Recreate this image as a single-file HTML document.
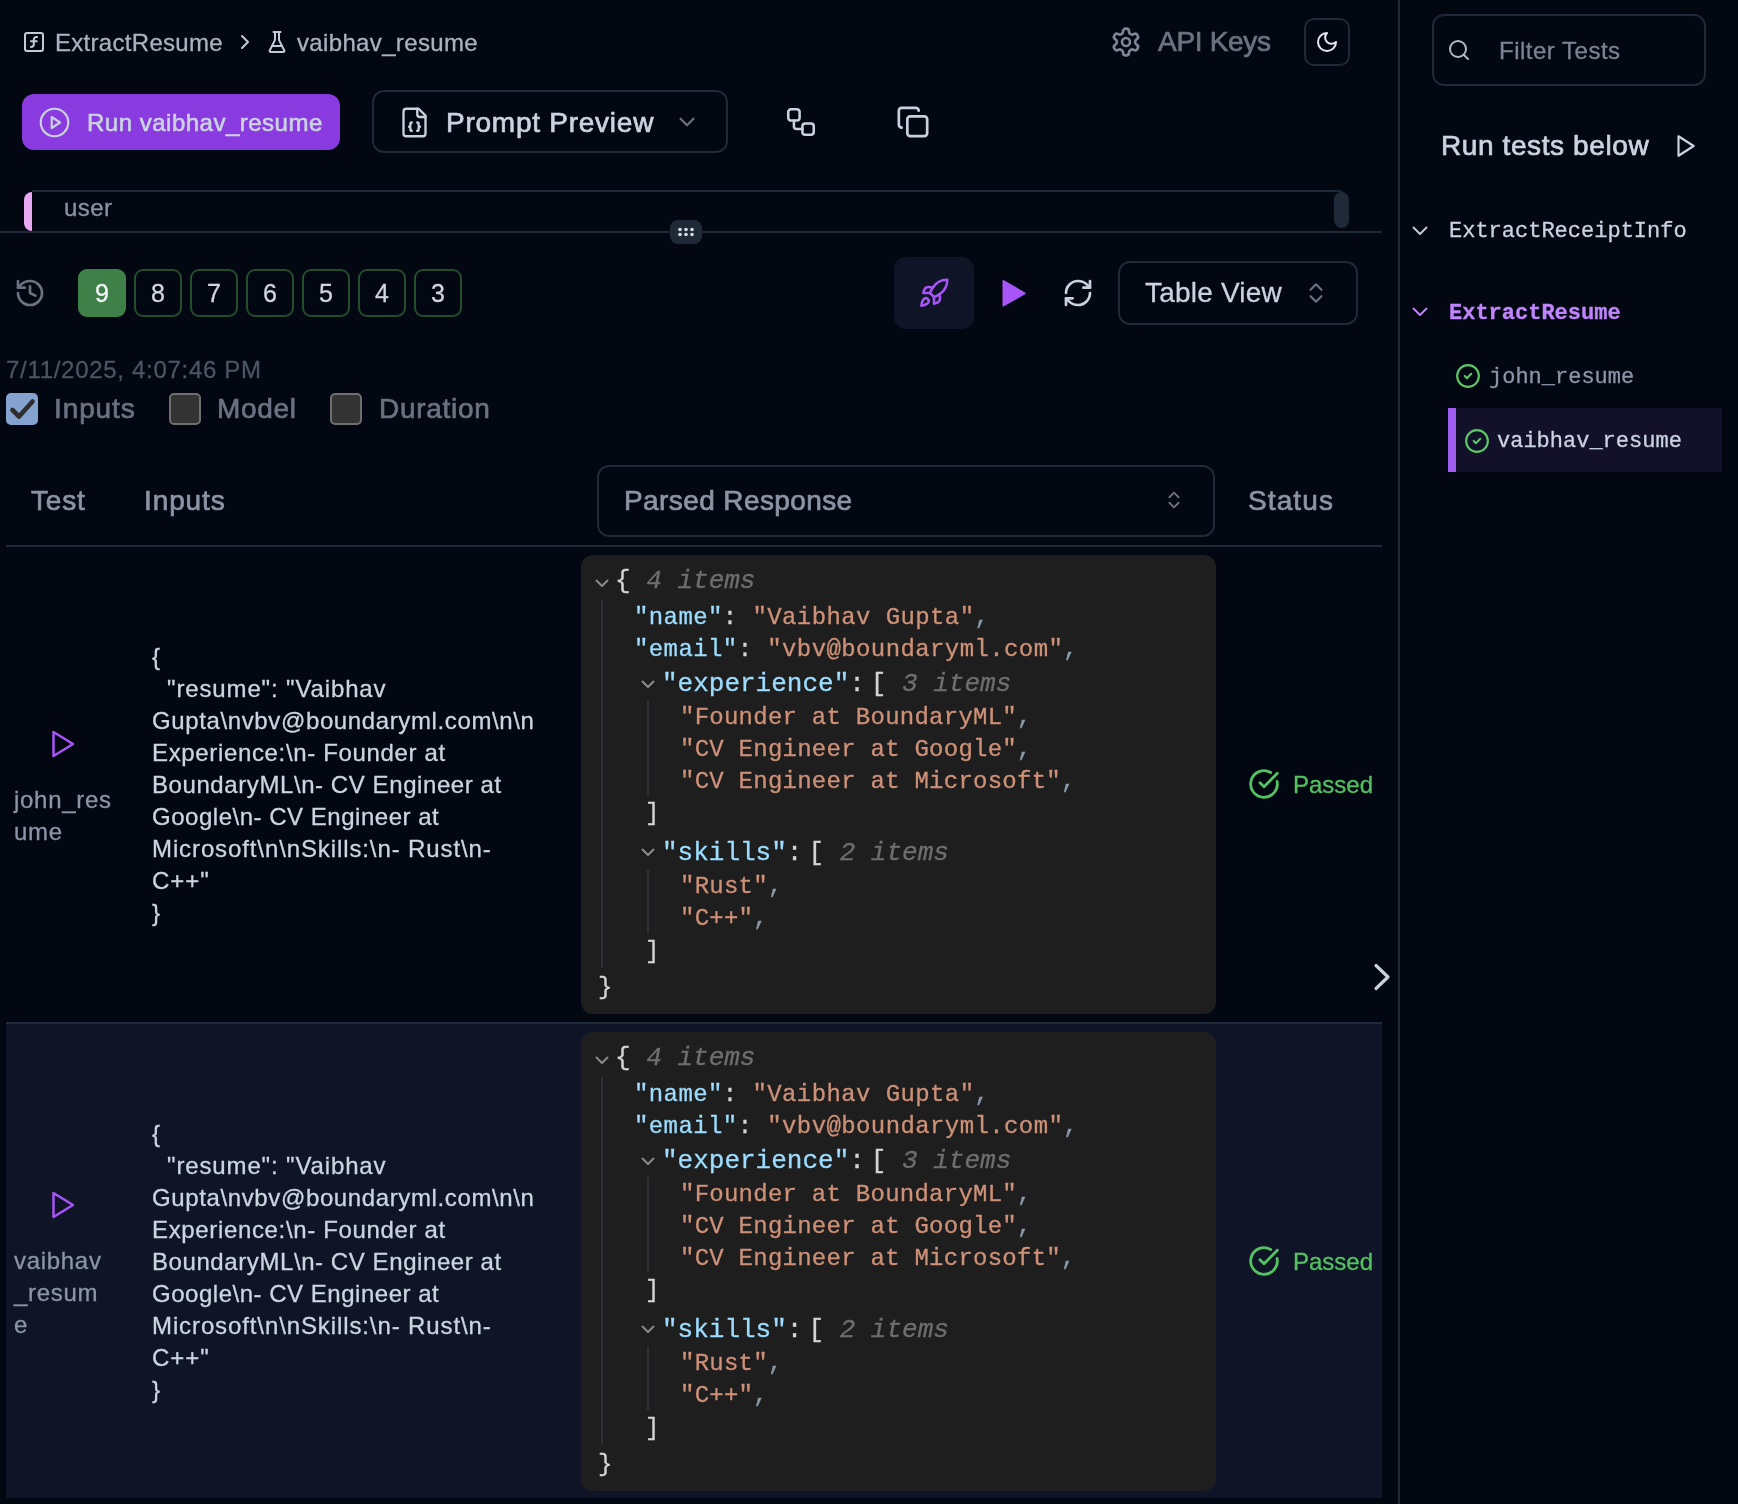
<!DOCTYPE html>
<html><head><meta charset="utf-8">
<style>
*{box-sizing:border-box;margin:0;padding:0}
html,body{width:1738px;height:1504px;overflow:hidden;background:#030712}
body{position:relative;font-family:"Liberation Sans",sans-serif;color:#cdd5e0}
.a{position:absolute;white-space:pre;line-height:1;-webkit-text-stroke-width:0.3px;will-change:transform}
.m{font-family:"Liberation Mono",monospace}
svg{position:absolute;overflow:visible}
.ic{fill:none;stroke:currentColor;stroke-linecap:round;stroke-linejoin:round}
.sb{-webkit-text-stroke-width:0.7px}
.box{position:absolute;border:2px solid #1f2937;border-radius:12px}
</style></head><body>

<!-- ===== TOP BAR ===== -->
<svg class="ic" style="left:22px;top:30px;width:24px;height:24px;color:#c3cbd8" viewBox="0 0 24 24" stroke-width="2"><rect width="18" height="18" x="3" y="3" rx="2" ry="2"/><path d="M9 17c2 0 2.8-1 2.8-2.8V10c0-2 1-3.3 3.2-3"/><path d="M9 11.2h5.7"/></svg>
<div class="a" style="left:55px;top:31px;font-size:24px;color:#aab2bf;letter-spacing:0.3px">ExtractResume</div>
<svg class="ic" style="left:233px;top:30px;width:24px;height:24px;color:#c3cbd8" viewBox="0 0 24 24" stroke-width="2"><path d="m9 18 6-6-6-6"/></svg>
<svg class="ic" style="left:265px;top:30px;width:24px;height:24px;color:#c3cbd8" viewBox="0 0 24 24" stroke-width="2"><path d="M10 2v7.527a2 2 0 0 1-.211.896L4.72 20.55a1 1 0 0 0 .9 1.45h12.76a1 1 0 0 0 .9-1.45l-5.069-10.127A2 2 0 0 1 14 9.527V2"/><path d="M8.5 2h7"/><path d="M7 16h10"/></svg>
<div class="a" style="left:297px;top:31px;font-size:24px;color:#aab2bf;letter-spacing:0.35px">vaibhav_resume</div>

<svg class="ic" style="left:1110px;top:26px;width:32px;height:32px;color:#7d8696" viewBox="0 0 24 24" stroke-width="2"><path d="M12.22 2h-.44a2 2 0 0 0-2 2v.18a2 2 0 0 1-1 1.73l-.43.25a2 2 0 0 1-2 0l-.15-.08a2 2 0 0 0-2.73.73l-.22.38a2 2 0 0 0 .73 2.73l.15.1a2 2 0 0 1 1 1.72v.51a2 2 0 0 1-1 1.74l-.15.09a2 2 0 0 0-.73 2.73l.22.38a2 2 0 0 0 2.730.73l.15-.08a2 2 0 0 1 2 0l.43.25a2 2 0 0 1 1 1.73V20a2 2 0 0 0 2 2h.44a2 2 0 0 0 2-2v-.18a2 2 0 0 1 1-1.73l.43-.25a2 2 0 0 1 2 0l.15.08a2 2 0 0 0 2.73-.73l.22-.39a2 2 0 0 0-.73-2.73l-.15-.08a2 2 0 0 1-1-1.74v-.5a2 2 0 0 1 1-1.74l.15-.09a2 2 0 0 0 .73-2.73l-.22-.38a2 2 0 0 0-2.73-.73l-.15.08a2 2 0 0 1-2 0l-.43-.25a2 2 0 0 1-1-1.73V4a2 2 0 0 0-2-2z"/><circle cx="12" cy="12" r="3"/></svg>
<div class="a sb" style="left:1158px;top:28px;font-size:28px;color:#6b7280;letter-spacing:-0.3px">API Keys</div>
<div class="box" style="left:1304px;top:18px;width:46px;height:48px;border-radius:10px"></div>
<svg class="ic" style="left:1315px;top:30px;width:24px;height:24px;color:#e5e9f0" viewBox="0 0 24 24" stroke-width="2"><path d="M12 3a6 6 0 0 0 9 9 9 9 0 1 1-9-9Z"/></svg>

<!-- Run button -->
<div style="position:absolute;left:22px;top:94px;width:318px;height:56px;background:#8a3be0;border-radius:12px"></div>
<svg class="ic" style="left:37.5px;top:105.5px;width:33px;height:33px;color:#c9d1df" viewBox="0 0 24 24" stroke-width="1.6"><circle cx="12" cy="12" r="10"/><polygon points="10 8 16 12 10 16 10 8"/></svg>
<div class="a sb" style="left:87px;top:111px;font-size:24px;color:#cbd3e1;letter-spacing:0.5px;-webkit-text-stroke-width:0.6px">Run vaibhav_resume</div>

<!-- Prompt Preview -->
<div class="box" style="left:372px;top:90px;width:356px;height:63px"></div>
<svg class="ic" style="left:397.5px;top:105.5px;width:33px;height:33px;color:#c9d1df" viewBox="0 0 24 24" stroke-width="1.7"><path d="M15 2H6a2 2 0 0 0-2 2v16a2 2 0 0 0 2 2h12a2 2 0 0 0 2-2V7Z"/><path d="M14 2v4a2 2 0 0 0 2 2h4"/><path d="M10 12a1 1 0 0 0-1 1v1a1 1 0 0 1-1 1 1 1 0 0 1 1 1v1a1 1 0 0 0 1 1"/><path d="M14 18a1 1 0 0 0 1-1v-1a1 1 0 0 1 1-1 1 1 0 0 1-1-1v-1a1 1 0 0 0-1-1"/></svg>
<div class="a sb" style="left:446px;top:109px;font-size:28px;color:#cbd3e1;letter-spacing:0.75px">Prompt Preview</div>
<svg class="ic" style="left:674px;top:109px;width:26px;height:26px;color:#6b7280" viewBox="0 0 24 24" stroke-width="2"><path d="m6 9 6 6 6-6"/></svg>

<svg class="ic" style="left:784px;top:105px;width:34px;height:34px;color:#c9d1df" viewBox="0 0 24 24" stroke-width="1.8"><rect width="8" height="8" x="3" y="3" rx="2"/><path d="M7 11v4a2 2 0 0 0 2 2h4"/><rect width="8" height="8" x="13" y="13" rx="2"/></svg>
<svg class="ic" style="left:896px;top:105px;width:34px;height:34px;color:#c9d1df" viewBox="0 0 24 24" stroke-width="1.9"><rect width="14" height="14" x="8" y="8" rx="2" ry="2"/><path d="M4 16c-1.1 0-2-.9-2-2V4c0-1.1.9-2 2-2h10c1.1 0 2 .9 2 2"/></svg>

<!-- user bar -->
<div style="position:absolute;left:32px;top:190px;width:1314px;height:42px;border-top:2px solid #1f2937;border-radius:0 8px 0 0"></div>
<div style="position:absolute;left:24px;top:192px;width:8px;height:39px;background:#e9a9f2;border-radius:8px 0 0 8px"></div>
<div class="a" style="left:64px;top:196px;font-size:24px;color:#8a94a6;letter-spacing:0.4px">user</div>
<div style="position:absolute;left:1334px;top:192px;width:15px;height:36px;background:#1f2937;border-radius:8px"></div>
<div style="position:absolute;left:0;top:231px;width:1382px;height:2px;background:#1f2937"></div>
<div style="position:absolute;left:670px;top:220px;width:32px;height:24px;background:#1f2937;border-radius:8px"></div>
<svg style="left:670px;top:220px;width:32px;height:24px" viewBox="0 0 32 24"><g fill="#d8dee8"><circle cx="10" cy="9.5" r="1.8"/><circle cx="16" cy="9.5" r="1.8"/><circle cx="22" cy="9.5" r="1.8"/><circle cx="10" cy="14.5" r="1.8"/><circle cx="16" cy="14.5" r="1.8"/><circle cx="22" cy="14.5" r="1.8"/></g></svg>

<!-- history row -->
<svg class="ic" style="left:14px;top:277px;width:32px;height:32px;color:#6b7280" viewBox="0 0 24 24" stroke-width="2"><path d="M3 12a9 9 0 1 0 9-9 9.75 9.75 0 0 0-6.74 2.74L3 8"/><path d="M3 3v5h5"/><path d="M12 7v5l4 2"/></svg>
<div style="position:absolute;left:78px;top:269px;width:48px;height:48px;background:#3f8048;border-radius:9px"></div>
<div class="a" style="left:78px;top:281px;width:48px;text-align:center;font-size:25px;color:#f3f5f8">9</div>
<div style="position:absolute;left:134px;top:269px;width:48px;height:48px;border:2px solid #244c2d;border-radius:9px"></div>
<div class="a" style="left:134px;top:281px;width:48px;text-align:center;font-size:25px;color:#d0d6e0">8</div>
<div style="position:absolute;left:190px;top:269px;width:48px;height:48px;border:2px solid #244c2d;border-radius:9px"></div>
<div class="a" style="left:190px;top:281px;width:48px;text-align:center;font-size:25px;color:#d0d6e0">7</div>
<div style="position:absolute;left:246px;top:269px;width:48px;height:48px;border:2px solid #244c2d;border-radius:9px"></div>
<div class="a" style="left:246px;top:281px;width:48px;text-align:center;font-size:25px;color:#d0d6e0">6</div>
<div style="position:absolute;left:302px;top:269px;width:48px;height:48px;border:2px solid #244c2d;border-radius:9px"></div>
<div class="a" style="left:302px;top:281px;width:48px;text-align:center;font-size:25px;color:#d0d6e0">5</div>
<div style="position:absolute;left:358px;top:269px;width:48px;height:48px;border:2px solid #244c2d;border-radius:9px"></div>
<div class="a" style="left:358px;top:281px;width:48px;text-align:center;font-size:25px;color:#d0d6e0">4</div>
<div style="position:absolute;left:414px;top:269px;width:48px;height:48px;border:2px solid #244c2d;border-radius:9px"></div>
<div class="a" style="left:414px;top:281px;width:48px;text-align:center;font-size:25px;color:#d0d6e0">3</div>

<!-- right tools -->
<div style="position:absolute;left:894px;top:257px;width:80px;height:72px;background:#0f1527;border-radius:12px"></div>
<svg class="ic" style="left:918px;top:277px;width:32px;height:32px;color:#a855f7" viewBox="0 0 24 24" stroke-width="1.9"><path d="M4.5 16.5c-1.5 1.26-2 5-2 5s3.74-.5 5-2c.71-.84.7-2.13-.09-2.91a2.18 2.18 0 0 0-2.91-.09z"/><path d="m12 15-3-3a22 22 0 0 1 2-3.95A12.88 12.88 0 0 1 22 2c0 2.72-.78 7.5-6 11a22.35 22.35 0 0 1-4 2z"/><path d="M9 12H4s.55-3.03 2-4c1.62-1.08 5 0 5 0"/><path d="M12 15v5s3.03-.55 4-2c1.08-1.62 0-5 0-5"/></svg>
<svg style="left:996px;top:274px;width:36px;height:36px" viewBox="0 0 36 36"><polygon points="7.5 7 28.5 19.3 7.5 31.5" fill="#a855f7" stroke="#a855f7" stroke-width="2" stroke-linejoin="round"/></svg>
<svg class="ic" style="left:1062px;top:277px;width:32px;height:32px;color:#c9d1df" viewBox="0 0 24 24" stroke-width="2"><path d="M3 12a9 9 0 0 1 9-9 9.75 9.75 0 0 1 6.74 2.74L21 8"/><path d="M21 3v5h-5"/><path d="M21 12a9 9 0 0 1-9 9 9.75 9.75 0 0 1-6.74-2.74L3 16"/><path d="M8 16H3v5"/></svg>
<div class="box" style="left:1118px;top:261px;width:240px;height:64px"></div>
<div class="a" style="left:1145px;top:279px;font-size:28px;color:#cbd3e1;letter-spacing:0.2px">Table View</div>
<svg class="ic" style="left:1303px;top:280px;width:26px;height:26px;color:#6b7280" viewBox="0 0 24 24" stroke-width="2"><path d="m7 15 5 5 5-5"/><path d="m7 9 5-5 5 5"/></svg>

<!-- date + checkboxes -->
<div class="a" style="left:6px;top:358px;font-size:24px;color:#4b5563;letter-spacing:0.7px">7/11/2025, 4:07:46 PM</div>
<div style="position:absolute;left:6px;top:393px;width:32px;height:32px;background:#84a3d0;border-radius:5px"></div>
<svg class="ic" style="left:6px;top:393px;width:32px;height:32px;color:#2e2e2e" viewBox="0 0 32 32" stroke-width="4.6" stroke-linecap="butt" stroke-linejoin="miter"><path d="M6.5 17l6.5 6.5L26.5 8.5"/></svg>
<div class="a sb" style="left:54px;top:395px;font-size:28px;color:#6b7280;letter-spacing:0.9px">Inputs</div>
<div style="position:absolute;left:169px;top:393px;width:32px;height:32px;background:#333;border:2px solid #6f6f6f;border-radius:5px"></div>
<div class="a sb" style="left:217px;top:395px;font-size:28px;color:#6b7280;letter-spacing:0.65px">Model</div>
<div style="position:absolute;left:330px;top:393px;width:32px;height:32px;background:#333;border:2px solid #6f6f6f;border-radius:5px"></div>
<div class="a sb" style="left:379px;top:395px;font-size:28px;color:#6b7280;letter-spacing:0.7px">Duration</div>

<!-- table header -->
<div class="a sb" style="left:31px;top:487px;font-size:28px;color:#8b95a5;letter-spacing:0.85px">Test</div>
<div class="a sb" style="left:144px;top:487px;font-size:28px;color:#8b95a5;letter-spacing:0.9px">Inputs</div>
<div class="box" style="left:597px;top:465px;width:618px;height:72px"></div>
<div class="a sb" style="left:624px;top:487px;font-size:28px;color:#8b95a5;letter-spacing:0.4px">Parsed Response</div>
<svg class="ic" style="left:1163px;top:489px;width:22px;height:22px;color:#6b7280" viewBox="0 0 24 24" stroke-width="2"><path d="m7 15 5 5 5-5"/><path d="m7 9 5-5 5 5"/></svg>
<div class="a sb" style="left:1248px;top:487px;font-size:28px;color:#8b95a5;letter-spacing:1.1px">Status</div>
<div style="position:absolute;left:6px;top:545px;width:1376px;height:2px;background:#1f2937"></div>

<!-- rows -->
<svg class="ic" style="left:50px;top:729px;width:26px;height:30px;color:#a855f7" viewBox="0 0 26 30" stroke-width="2.5"><path d="M3.5 3v24L23 15z"/></svg>
<div class="a" style="left:14px;top:788.3px;font-size:24px;color:#8b95a7;letter-spacing:0.7px">john_res</div>
<div class="a" style="left:14px;top:820.3px;font-size:24px;color:#8b95a7;letter-spacing:0.7px">ume</div>
<div class="a" style="left:152px;top:644.7px;font-size:24px;color:#cbd5e1;letter-spacing:0px">{</div>
<div class="a" style="left:152px;top:676.7px;font-size:24px;color:#cbd5e1;letter-spacing:0.86px">  "resume": "Vaibhav</div>
<div class="a" style="left:152px;top:708.7px;font-size:24px;color:#cbd5e1;letter-spacing:0.62px">Gupta\nvbv@boundaryml.com\n\n</div>
<div class="a" style="left:152px;top:740.7px;font-size:24px;color:#cbd5e1;letter-spacing:0.65px">Experience:\n- Founder at</div>
<div class="a" style="left:152px;top:772.7px;font-size:24px;color:#cbd5e1;letter-spacing:0.58px">BoundaryML\n- CV Engineer at</div>
<div class="a" style="left:152px;top:804.7px;font-size:24px;color:#cbd5e1;letter-spacing:0.52px">Google\n- CV Engineer at</div>
<div class="a" style="left:152px;top:836.7px;font-size:24px;color:#cbd5e1;letter-spacing:0.89px">Microsoft\n\nSkills:\n- Rust\n-</div>
<div class="a" style="left:152px;top:868.7px;font-size:24px;color:#cbd5e1;letter-spacing:1.0px">C++"</div>
<div class="a" style="left:152px;top:900.7px;font-size:24px;color:#cbd5e1;letter-spacing:0px">}</div>
<div style="position:absolute;left:581px;top:555px;width:635px;height:459px;background:#1e1e1e;border-radius:12px"></div>
<div style="position:absolute;left:601px;top:600px;width:2px;height:368px;background:#2f2f38"></div>
<div style="position:absolute;left:647px;top:700px;width:2px;height:95px;background:#2f2f38"></div>
<div style="position:absolute;left:647px;top:870px;width:2px;height:63px;background:#2f2f38"></div>
<svg class="ic" style="left:595px;top:579px;width:14px;height:9px;color:#8a8a8a" viewBox="0 0 14 9" stroke-width="2"><path d="M1.5 1.5l5.5 5.5 5.5-5.5"/></svg>
<svg class="ic" style="left:641px;top:680px;width:14px;height:9px;color:#8a8a8a" viewBox="0 0 14 9" stroke-width="2"><path d="M1.5 1.5l5.5 5.5 5.5-5.5"/></svg>
<svg class="ic" style="left:641px;top:848px;width:14px;height:9px;color:#8a8a8a" viewBox="0 0 14 9" stroke-width="2"><path d="M1.5 1.5l5.5 5.5 5.5-5.5"/></svg>
<div class="a m" style="left:615px;top:567.6px;font-size:26px;color:#d4d4d4;letter-spacing:0px">{ <i style="color:#6e6e6e">4 items</i></div>
<div class="a m" style="left:633.5px;top:606.4px;font-size:24px;color:#d4d4d4;letter-spacing:0.4px"><span style="color:#9cdcfe">"name"</span>: <span style="color:#ce9178">"Vaibhav Gupta"</span><span style="color:#8899aa">,</span></div>
<div class="a m" style="left:633.5px;top:638.3px;font-size:24px;color:#d4d4d4;letter-spacing:0.4px"><span style="color:#9cdcfe">"email"</span>: <span style="color:#ce9178">"vbv@boundaryml.com"</span><span style="color:#8899aa">,</span></div>
<div class="a m" style="left:662px;top:670.9px;font-size:26px;color:#d4d4d4;letter-spacing:0px"><span style="color:#9cdcfe">"experience"</span>:<span style="margin-left:6px">[</span> <i style="color:#6e6e6e">3 items</i></div>
<div class="a m" style="left:679.5px;top:706.2px;font-size:24px;color:#d4d4d4;letter-spacing:0.25px"><span style="color:#ce9178">"Founder at BoundaryML"</span><span style="color:#8899aa">,</span></div>
<div class="a m" style="left:679.5px;top:738.1px;font-size:24px;color:#d4d4d4;letter-spacing:0.25px"><span style="color:#ce9178">"CV Engineer at Google"</span><span style="color:#8899aa">,</span></div>
<div class="a m" style="left:679.5px;top:770.0px;font-size:24px;color:#d4d4d4;letter-spacing:0.25px"><span style="color:#ce9178">"CV Engineer at Microsoft"</span><span style="color:#8899aa">,</span></div>
<div class="a m" style="left:645px;top:802.1px;font-size:24px;color:#d4d4d4;letter-spacing:0px">]</div>
<div class="a m" style="left:662px;top:839.7px;font-size:26px;color:#d4d4d4;letter-spacing:0px"><span style="color:#9cdcfe">"skills"</span>:<span style="margin-left:6px">[</span> <i style="color:#6e6e6e">2 items</i></div>
<div class="a m" style="left:679.5px;top:875.1px;font-size:24px;color:#d4d4d4;letter-spacing:0.25px"><span style="color:#ce9178">"Rust"</span><span style="color:#8899aa">,</span></div>
<div class="a m" style="left:679.5px;top:907.2px;font-size:24px;color:#d4d4d4;letter-spacing:0.25px"><span style="color:#ce9178">"C++"</span><span style="color:#8899aa">,</span></div>
<div class="a m" style="left:645px;top:940.1px;font-size:24px;color:#d4d4d4;letter-spacing:0px">]</div>
<div class="a m" style="left:598px;top:976.1px;font-size:24px;color:#d4d4d4;letter-spacing:0px">}</div>
<svg class="ic" style="left:1248px;top:768px;width:32px;height:32px;color:#55c261" viewBox="0 0 24 24" stroke-width="2.1"><path d="M21.801 10A10 10 0 1 1 17 3.335"/><path d="m9 11 3 3L22 4"/></svg>
<div class="a" style="left:1293px;top:772.7px;font-size:24px;color:#55c261">Passed</div>
<svg class="ic" style="left:1370px;top:960px;width:24px;height:34px;color:#c9d1df" viewBox="0 0 24 34" stroke-width="3.2"><path d="M6 5.5l12 11.5-12 11.5"/></svg>
<div style="position:absolute;left:6px;top:1022px;width:1376px;height:2px;background:#1f2937"></div>
<div style="position:absolute;left:6px;top:1024px;width:1376px;height:474px;background:#0f1527"></div>
<svg class="ic" style="left:50px;top:1190px;width:26px;height:30px;color:#a855f7" viewBox="0 0 26 30" stroke-width="2.5"><path d="M3.5 3v24L23 15z"/></svg>
<div class="a" style="left:14px;top:1249.3px;font-size:24px;color:#8b95a7;letter-spacing:0.7px">vaibhav</div>
<div class="a" style="left:14px;top:1281.3px;font-size:24px;color:#8b95a7;letter-spacing:0.7px">_resum</div>
<div class="a" style="left:14px;top:1313.3px;font-size:24px;color:#8b95a7;letter-spacing:0.7px">e</div>
<div class="a" style="left:152px;top:1121.7px;font-size:24px;color:#cbd5e1;letter-spacing:0px">{</div>
<div class="a" style="left:152px;top:1153.7px;font-size:24px;color:#cbd5e1;letter-spacing:0.86px">  "resume": "Vaibhav</div>
<div class="a" style="left:152px;top:1185.7px;font-size:24px;color:#cbd5e1;letter-spacing:0.62px">Gupta\nvbv@boundaryml.com\n\n</div>
<div class="a" style="left:152px;top:1217.7px;font-size:24px;color:#cbd5e1;letter-spacing:0.65px">Experience:\n- Founder at</div>
<div class="a" style="left:152px;top:1249.7px;font-size:24px;color:#cbd5e1;letter-spacing:0.58px">BoundaryML\n- CV Engineer at</div>
<div class="a" style="left:152px;top:1281.7px;font-size:24px;color:#cbd5e1;letter-spacing:0.52px">Google\n- CV Engineer at</div>
<div class="a" style="left:152px;top:1313.7px;font-size:24px;color:#cbd5e1;letter-spacing:0.89px">Microsoft\n\nSkills:\n- Rust\n-</div>
<div class="a" style="left:152px;top:1345.7px;font-size:24px;color:#cbd5e1;letter-spacing:1.0px">C++"</div>
<div class="a" style="left:152px;top:1377.7px;font-size:24px;color:#cbd5e1;letter-spacing:0px">}</div>
<div style="position:absolute;left:581px;top:1032px;width:635px;height:459px;background:#1e1e1e;border-radius:12px"></div>
<div style="position:absolute;left:601px;top:1077px;width:2px;height:368px;background:#2f2f38"></div>
<div style="position:absolute;left:647px;top:1177px;width:2px;height:95px;background:#2f2f38"></div>
<div style="position:absolute;left:647px;top:1347px;width:2px;height:63px;background:#2f2f38"></div>
<svg class="ic" style="left:595px;top:1056px;width:14px;height:9px;color:#8a8a8a" viewBox="0 0 14 9" stroke-width="2"><path d="M1.5 1.5l5.5 5.5 5.5-5.5"/></svg>
<svg class="ic" style="left:641px;top:1157px;width:14px;height:9px;color:#8a8a8a" viewBox="0 0 14 9" stroke-width="2"><path d="M1.5 1.5l5.5 5.5 5.5-5.5"/></svg>
<svg class="ic" style="left:641px;top:1325px;width:14px;height:9px;color:#8a8a8a" viewBox="0 0 14 9" stroke-width="2"><path d="M1.5 1.5l5.5 5.5 5.5-5.5"/></svg>
<div class="a m" style="left:615px;top:1044.6px;font-size:26px;color:#d4d4d4;letter-spacing:0px">{ <i style="color:#6e6e6e">4 items</i></div>
<div class="a m" style="left:633.5px;top:1083.4px;font-size:24px;color:#d4d4d4;letter-spacing:0.4px"><span style="color:#9cdcfe">"name"</span>: <span style="color:#ce9178">"Vaibhav Gupta"</span><span style="color:#8899aa">,</span></div>
<div class="a m" style="left:633.5px;top:1115.3px;font-size:24px;color:#d4d4d4;letter-spacing:0.4px"><span style="color:#9cdcfe">"email"</span>: <span style="color:#ce9178">"vbv@boundaryml.com"</span><span style="color:#8899aa">,</span></div>
<div class="a m" style="left:662px;top:1147.9px;font-size:26px;color:#d4d4d4;letter-spacing:0px"><span style="color:#9cdcfe">"experience"</span>:<span style="margin-left:6px">[</span> <i style="color:#6e6e6e">3 items</i></div>
<div class="a m" style="left:679.5px;top:1183.2px;font-size:24px;color:#d4d4d4;letter-spacing:0.25px"><span style="color:#ce9178">"Founder at BoundaryML"</span><span style="color:#8899aa">,</span></div>
<div class="a m" style="left:679.5px;top:1215.1px;font-size:24px;color:#d4d4d4;letter-spacing:0.25px"><span style="color:#ce9178">"CV Engineer at Google"</span><span style="color:#8899aa">,</span></div>
<div class="a m" style="left:679.5px;top:1247.0px;font-size:24px;color:#d4d4d4;letter-spacing:0.25px"><span style="color:#ce9178">"CV Engineer at Microsoft"</span><span style="color:#8899aa">,</span></div>
<div class="a m" style="left:645px;top:1279.1px;font-size:24px;color:#d4d4d4;letter-spacing:0px">]</div>
<div class="a m" style="left:662px;top:1316.7px;font-size:26px;color:#d4d4d4;letter-spacing:0px"><span style="color:#9cdcfe">"skills"</span>:<span style="margin-left:6px">[</span> <i style="color:#6e6e6e">2 items</i></div>
<div class="a m" style="left:679.5px;top:1352.1px;font-size:24px;color:#d4d4d4;letter-spacing:0.25px"><span style="color:#ce9178">"Rust"</span><span style="color:#8899aa">,</span></div>
<div class="a m" style="left:679.5px;top:1384.2px;font-size:24px;color:#d4d4d4;letter-spacing:0.25px"><span style="color:#ce9178">"C++"</span><span style="color:#8899aa">,</span></div>
<div class="a m" style="left:645px;top:1417.1px;font-size:24px;color:#d4d4d4;letter-spacing:0px">]</div>
<div class="a m" style="left:598px;top:1453.1px;font-size:24px;color:#d4d4d4;letter-spacing:0px">}</div>
<svg class="ic" style="left:1248px;top:1245px;width:32px;height:32px;color:#55c261" viewBox="0 0 24 24" stroke-width="2.1"><path d="M21.801 10A10 10 0 1 1 17 3.335"/><path d="m9 11 3 3L22 4"/></svg>
<div class="a" style="left:1293px;top:1249.7px;font-size:24px;color:#55c261">Passed</div>

<!-- sidebar -->
<div style="position:absolute;left:1398px;top:0;width:2px;height:1504px;background:#1f2937"></div>
<div class="box" style="left:1432px;top:14px;width:274px;height:72px"></div>
<svg class="ic" style="left:1447px;top:38px;width:24px;height:24px;color:#b0b8c4" viewBox="0 0 24 24" stroke-width="2"><circle cx="11" cy="11" r="8"/><path d="m21 21-4.3-4.3"/></svg>
<div class="a" style="left:1499px;top:39px;font-size:24px;color:#7b8494;letter-spacing:0.5px">Filter Tests</div>
<div class="a sb" style="left:1441px;top:132px;font-size:28px;color:#cbd3e1;letter-spacing:0.6px">Run tests below</div>
<svg class="ic" style="left:1672px;top:133px;width:26px;height:26px;color:#cbd3e1" viewBox="0 0 24 24" stroke-width="2"><polygon points="6 3 20 12 6 21 6 3"/></svg>

<svg class="ic" style="left:1410px;top:222px;width:20px;height:16px;color:#c3cbd8" viewBox="0 0 20 16" stroke-width="1.9"><path d="M3.5 5.5L10 12l6.5-6.5"/></svg>
<div class="a m" style="left:1449px;top:221px;font-size:22px;color:#cbd3e1">ExtractReceiptInfo</div>
<svg class="ic" style="left:1410px;top:303px;width:20px;height:16px;color:#c084fc" viewBox="0 0 20 16" stroke-width="1.9"><path d="M3.5 5.5L10 12l6.5-6.5"/></svg>
<div class="a m" style="left:1449px;top:303px;font-size:22px;font-weight:700;color:#c084fc">ExtractResume</div>
<svg class="ic" style="left:1455px;top:363px;width:26px;height:26px;color:#5cc566" viewBox="0 0 24 24" stroke-width="2"><circle cx="12" cy="12" r="10"/><path d="m9 12 2 2 4-4"/></svg>
<div class="a m" style="left:1489px;top:367px;font-size:22px;color:#8b95a7">john_resume</div>
<div style="position:absolute;left:1448px;top:408px;width:274px;height:64px;background:#13112a"></div>
<div style="position:absolute;left:1448px;top:408px;width:8px;height:64px;background:#a15cf0"></div>
<svg class="ic" style="left:1464px;top:428px;width:26px;height:26px;color:#5cc566" viewBox="0 0 24 24" stroke-width="2"><circle cx="12" cy="12" r="10"/><path d="m9 12 2 2 4-4"/></svg>
<div class="a m" style="left:1497px;top:431px;font-size:22px;color:#cbd3e1">vaibhav_resume</div>

</body></html>
